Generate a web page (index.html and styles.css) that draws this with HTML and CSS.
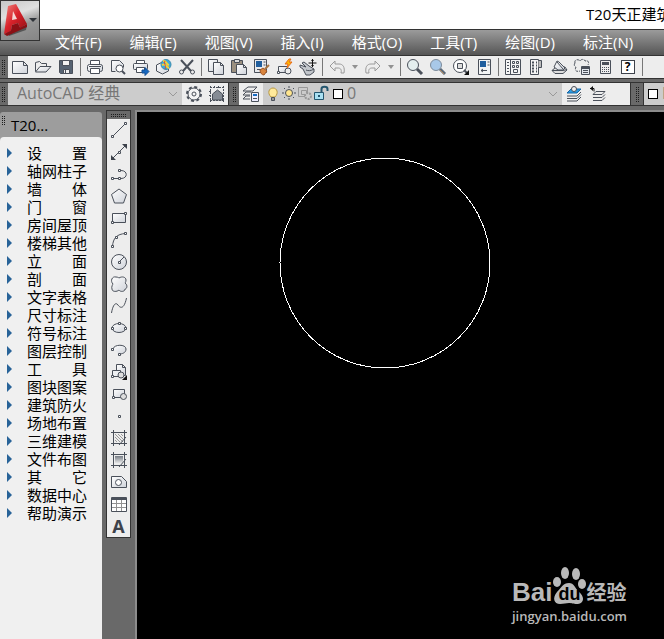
FILE: index.html
```html
<!DOCTYPE html>
<html lang="zh-CN">
<head>
<meta charset="utf-8">
<title>T20天正建筑</title>
<link rel="stylesheet" href="styles.css">
</head>
<body>
<svg class="defs" aria-hidden="true">
  <defs>
    <linearGradient id="pale" x1="0" y1="0" x2="1" y2="1"><stop offset="0" stop-color="#fff"/><stop offset="1" stop-color="#cfd3da"/></linearGradient>
    <linearGradient id="shade" x1="0" y1="0" x2="0" y2="1"><stop offset="0" stop-color="#777d85"/><stop offset="1" stop-color="#f4f4f4"/></linearGradient>
    <linearGradient id="red" x1="0" y1="0" x2="1" y2="1"><stop offset="0" stop-color="#ef8a82"/><stop offset=".45" stop-color="#d9232b"/><stop offset="1" stop-color="#8e0c12"/></linearGradient>
  </defs>
</svg>

<header class="titlebar">
  <button class="app" aria-label="应用程序菜单">
    <svg width="38" height="39" viewBox="0 0 38 39"><path d="M5 30 8 35l17-6 1-5z" fill="#555"/><path d="M7 5 15 3 26 23 19 27 17 22 11 24 10 30 3 33z" fill="url(#red)"/><path d="M12 10 16 18 11 19z" fill="#f5d6d3"/><path d="M3 33 10 30 11 24 17 22 19 27 26 23v3L6 35z" fill="#8b1015"/><path d="M28 17h8l-4 4z" fill="#30343a"/></svg>
  </button>
  <h1>T20天正建筑</h1>
</header>

<nav class="menu">
  <button>文件(F)</button><button>编辑(E)</button><button>视图(V)</button><button>插入(I)</button><button>格式(O)</button><button>工具(T)</button><button>绘图(D)</button><button>标注(N)</button>
</nav>

<div class="bar" role="toolbar">
  <i class="grip"></i>
  <div class="tools">
    <button aria-label="新建"><svg viewBox="0 0 18 18"><path d="M1.500 3.500h11l4 4v8h-15z" fill="url(#pale)"/><path d="M12.500 3.500v4h4"/></svg></button>
    <button aria-label="打开"><svg viewBox="0 0 18 18"><path d="M1.500 13.500v-9l4-1 2 2h5v3"/><path d="M1.500 14 6 8.500h11L12 14z" fill="url(#pale)"/></svg></button>
    <button aria-label="保存"><svg viewBox="0 0 18 18"><path d="M2.500 2.500h13v13h-12l-1-1z" fill="#566372"/><path d="M5.500 2.500h7v5h-7z" fill="#f2f2f2"/><path d="M6.500 11.500h6v4h-6z" fill="#eee"/><path d="M8.500 12v3"/></svg></button>
    <i class="sep"></i>
    <button aria-label="打印"><svg viewBox="0 0 18 18"><path d="M4.500 7V2.500h9V7" fill="#fff"/><rect x="1.500" y="6.500" width="15" height="7" rx="2" fill="url(#pale)"/><path d="M4.500 10.500h9v5h-9z" fill="#fff"/><path d="M3 8.500h12"/></svg></button>
    <button aria-label="打印预览"><svg viewBox="0 0 18 18"><path d="M2.500 13.500v-11h8l4 4v3M2.500 13.500h4" fill="url(#pale)"/><circle cx="10.500" cy="10.500" r="3.500" fill="#fff"/><path d="m13 13 3 3" stroke-width="2"/></svg></button>
    <button aria-label="发布"><svg viewBox="0 0 18 18"><path d="M4.500 6V2.500h8V6" fill="#fff"/><rect x="1.500" y="5.500" width="14" height="6" rx="1" fill="url(#pale)"/><path d="M4.500 9.500h8v5h-8z" fill="#fff"/><path d="M10 12h3V9.500l4 4-4 4V15h-3z" fill="#1768c0" stroke="#124f94"/></svg></button>
    <button aria-label="三维打印"><svg viewBox="0 0 18 18"><path d="m1.500 7 6-3 6 3v6l-6 3-6-3z" fill="url(#pale)"/><circle cx="11" cy="6.500" r="5" fill="#39a9dc" stroke="#3f8cac"/><path d="M8 3c5 0 2 3 6 4M7 7c4-2 4 2 7 3" stroke="#f1d23a" stroke-width="2"/><path d="M10 3c-2 3 2 4 0 8" stroke="#db4538"/></svg></button>
    <button aria-label="剪切"><svg viewBox="0 0 18 18"><path d="m3 2 10 11M15 2 5 13" stroke-width="2"/><circle cx="3.500" cy="14" r="2"/><circle cx="14.500" cy="14" r="2"/></svg></button>
    <i class="sep"></i>
    <button aria-label="复制"><svg viewBox="0 0 18 18"><path d="M1.500 1.500h9v12h-9z" fill="url(#pale)"/><path d="M6.500 4.500h7l3 3v9h-10z" fill="url(#pale)"/><path d="M13.500 4.500v3h3"/></svg></button>
    <button aria-label="粘贴"><svg viewBox="0 0 18 18"><path d="M1.500 2.500h11v12h-11z" fill="#9b9080"/><path d="M4.500 1.500h5v3h-5z" fill="#ddd"/><path d="M6.500 6.500h7l3 3v7h-10z" fill="url(#pale)"/><path d="M13.500 6.500v3h3"/></svg></button>
    <button aria-label="特性匹配"><svg viewBox="0 0 18 18"><path d="M1.500 1.500h12v13h-12z" fill="#e8eaed"/><path d="M3 3h6v6H3z" fill="#205f9e" stroke="none"/><path d="M10.500 4h2M10.500 7h2M4 11.500h4"/><path d="m16 7-4 4" stroke="#a77645" stroke-width="2"/><path d="m7 12 3-2 4 3-3 4c-2 0-4-2-4-5z" fill="#d9853e" stroke="#9c5525"/></svg></button>
    <button aria-label="块编辑器"><svg viewBox="0 0 18 18"><path d="M2.500 8.500h9v6h-9z" fill="url(#pale)"/><circle cx="12" cy="13" r="3" fill="#eee"/><path d="M1.500 13.500h2v2h-2z" fill="#fff"/><path d="m13 1-4 5h3l-1 4 5-6h-3l2-3z" fill="#ffb600" stroke="#e66b1b"/></svg></button>
    <button aria-label="平移"><svg viewBox="0 0 18 18"><path d="M4 11 1 9V7l6 2-4-4 2-1 5 4 5 3v3l-4 3H7z" fill="#c3c7cc"/><path d="M7 12c2 1 5 1 8-1"/><path d="M13.500 1v8M9.500 5h8" stroke="#111"/><path d="m12 3 1.500-2L15 3zM12 7l1.500 2L15 7z" fill="#111" stroke="none"/></svg></button>
    <i class="sep"></i>
    <button class="off" aria-label="放弃"><svg viewBox="0 0 18 18"><path d="m2 8 5-5v3h4c4 0 6 3 5 9h-3c1-4-1-5-3-5H7v3z"/></svg></button>
    <button class="caret" aria-label="放弃列表"></button>
    <button class="off" aria-label="重做"><svg viewBox="0 0 18 18"><path d="m16 8-5-5v3H7c-4 0-6 3-5 9h3c-1-4 1-5 3-5h3v3z"/></svg></button>
    <button class="caret" aria-label="重做列表"></button>
    <i class="sep"></i>
    <button aria-label="缩放"><svg viewBox="0 0 18 18"><circle cx="7" cy="7" r="5.500" fill="#e4eeee"/><path d="m11 11 5 5" stroke-width="3"/></svg></button>
    <button aria-label="窗口缩放"><svg viewBox="0 0 18 18"><circle cx="7" cy="7" r="5.500" fill="#a8c8e8" stroke="#7d8b9a"/><path d="m11 11 5 5" stroke="#5d6b7a" stroke-width="3"/><path d="m11 12 4 4" stroke="#b58a60"/></svg></button>
    <button aria-label="范围缩放"><svg viewBox="0 0 18 18"><circle cx="8" cy="8" r="6.500" fill="#fff"/><path d="M5.500 5.500h5v5h-5z" fill="#ddd"/><path d="m12 12 3 3" stroke-width="2"/><path d="M17 12v5h-5z" fill="#111" stroke="none"/></svg></button>
    <button aria-label="特性"><svg viewBox="0 0 18 18"><path d="M3.500 1.500h12v15h-12z" fill="#f2f4f5"/><path d="M5 3h6v6H5z" fill="#1f5f9f" stroke="none"/><path d="M12.500 4h2M12.500 7h2M6 12.500h6M8 11l-2 1.500L8 14"/></svg></button>
    <i class="sep"></i>
    <button aria-label="设计中心"><svg viewBox="0 0 18 18"><path d="M1.500 1.500h15v15h-15z" fill="#f5f5f5"/><path d="M6.500 2v14M3 4.500h2M3 7.500h2M3 10.500h2M3 13.500h2M8.500 3.500h2v2h-2zM12.500 3.500h2v2h-2zM8.500 7.500h2v2h-2zM12.500 7.500h2v2h-2zM9.500 11.500h4v3h-4z"/></svg></button>
    <button aria-label="工具选项板"><svg viewBox="0 0 18 18"><path d="M3.500 1.500h8v15h-8z" fill="#f5f5f5"/><path d="M11.500 2.500h3v7h-3" fill="#bbb"/><path d="M5 4.500h2M9 4.500h1M5 7.500h2M9 7.500h1M5 10.500h2M9 10.500h1M5 13.500h2M9 13.500h1" stroke-width="2"/></svg></button>
    <button aria-label="图纸集"><svg viewBox="0 0 18 18"><path d="M2 12.500 6 9h9l2 3-4 3.500H5z" fill="#ddd"/><path d="m4 9 3-6 2 1 6 6-2 2H8z" fill="url(#pale)"/><path d="m7 4 6 7M2 12.500h11l4-1"/></svg></button>
    <button aria-label="标记集"><svg viewBox="0 0 18 18"><path d="M2 5c-1-4 4-4 5-2 2-3 5-1 5 0 4-1 4 2 3 4M2 5c-2 3 1 4 1 4-2 4 1 5 4 4" stroke-dasharray="3 1"/><path d="M8.500 8.500h8v8h-8z" fill="#e3e7ed"/><path d="M9 10h7" stroke-width="2"/><path d="M10 12.500h5M10 14.500h5"/></svg></button>
    <button aria-label="计算器"><svg viewBox="0 0 18 18"><path d="M4.500 2.500h10v13h-10z" fill="#eee"/><path d="M6 5.500h7" stroke-width="3"/><path d="M6 9.500h7M6 11.500h7M6 13.500h7" stroke-dasharray="1 1"/></svg></button>
    <button class="help" aria-label="帮助"><span>?</span></button>
    <i class="sep"></i>
  </div>
</div>

<div class="bars">
  <i class="grip"></i>
  <div class="group">
    <div class="combo workspace"><select aria-label="工作空间"><option>AutoCAD 经典</option></select><svg class="chev" viewBox="0 0 10 6"><path d="m1 1 4 4 4-4"/></svg></div>
    <button aria-label="工作空间设置"><svg viewBox="0 0 18 18"><circle cx="9" cy="9" r="7" stroke-width="2" stroke-dasharray="3 2.500"/><circle cx="9" cy="9" r="6" fill="#f4f4f4"/><circle cx="9" cy="9" r="2"/></svg></button>
    <button aria-label="我的工作空间"><svg viewBox="0 0 18 18"><path d="M2 2.500h15M2 15.500h15M2.500 1v16M15.500 1v16M6.500 1v3M10.500 1v3M1 6.500h3M1 10.500h3" stroke-dasharray="2 1"/><path d="m4.500 9 5-4 5 4v6h-10z" fill="#858b94"/></svg></button>
  </div>
  <i class="grip"></i>
  <div class="group layers">
    <button aria-label="图层特性"><svg viewBox="0 0 18 18"><path d="m1 6 5-4h9l-4 4zM1 10l3-3h5M1 14l3-3h4M1 10h7M1 14h7"/><path d="M9.500 7.500h7v9h-7z" fill="#eef"/><path d="M11 9h4v2h-4z" fill="#176cc1" stroke="none"/><path d="M11 13.500h4"/></svg></button>
    <div class="combo layer">
      <svg viewBox="0 0 16 18"><path d="M6 12C2 8 4 3 8 3s6 5 2 9z" fill="#ffe99a" stroke="#b79844"/><path d="M6.500 12.500h3v3h-3z" fill="#999"/></svg>
      <svg viewBox="0 0 16 18"><circle cx="8" cy="8" r="3.500" fill="#ffe58d"/><path d="M8 1v2M8 13v2M1 8h2M13 8h2M3 3l1 1M12 12l1 1M13 3l-1 1M4 12l-1 1"/></svg>
      <svg class="faint" viewBox="0 0 16 18"><path d="M1.500 2.500h9v9h-9zM4.500 5.500h5v4h-5z"/><circle cx="11" cy="11" r="3" fill="#ccc" stroke-dasharray="2 1" stroke-width="2"/></svg>
      <svg viewBox="0 0 16 18"><path d="M1.500 7.500h9v7h-9z" fill="#a9e0f2" stroke="#24566e"/><path d="M8.500 8V4c0-3 6-3 6 0v2M6 10v2" stroke="#24566e" stroke-width="2"/></svg>
      <i class="swatch"></i>
      <select aria-label="图层"><option>0</option></select>
      <svg class="chev" viewBox="0 0 10 6"><path d="m1 1 4 4 4-4"/></svg>
    </div>
    <button aria-label="置为当前图层"><svg viewBox="0 0 18 18"><path d="m2 8 4-4h10l-4 4z" fill="#2b9ae0" stroke="#1768a8"/><circle cx="9" cy="4" r="2.500" fill="#eee"/><path d="M2 11h10l4-4M2 13.500h10l4-4M2 16h10l4-4"/></svg></button>
    <button aria-label="上一个图层"><svg viewBox="0 0 18 18"><path d="M1 3.500h4v3" stroke="#111"/><path d="M4 1v5L1 3.500z" fill="#111" stroke="none"/><path d="m4 9.500 3-3h9l-3 3zM4 12.500h9l3-3M4 15.500h9l3-3"/></svg></button>
  </div>
  <i class="grip wide"></i>
  <div class="combo color"><i class="swatch"></i><select aria-label="颜色"><option>ByLayer</option></select></div>
</div>

<main class="work">
  <aside class="side">
    <h2><i class="dots"></i>T20...</h2>
    <ul>
      <li><button>设　　置</button></li>
      <li><button>轴网柱子</button></li>
      <li><button>墙　　体</button></li>
      <li><button>门　　窗</button></li>
      <li><button>房间屋顶</button></li>
      <li><button>楼梯其他</button></li>
      <li><button>立　　面</button></li>
      <li><button>剖　　面</button></li>
      <li><button>文字表格</button></li>
      <li><button>尺寸标注</button></li>
      <li><button>符号标注</button></li>
      <li><button>图层控制</button></li>
      <li><button>工　　具</button></li>
      <li><button>图块图案</button></li>
      <li><button>建筑防火</button></li>
      <li><button>场地布置</button></li>
      <li><button>三维建模</button></li>
      <li><button>文件布图</button></li>
      <li><button>其　　它</button></li>
      <li><button>数据中心</button></li>
      <li><button>帮助演示</button></li>
    </ul>
  </aside>

  <div class="draw" role="toolbar" aria-label="绘图">
    <i class="handle"></i>
    <button aria-label="直线"><svg viewBox="0 0 18 18"><path d="M3 15 15 3"/><path class="node" d="M1.500 14.500h2v2h-2zM14.500 1.500h2v2h-2z"/></svg></button>
    <button aria-label="构造线"><svg viewBox="0 0 18 18"><path d="M3 15 15 3"/><path d="M1 12v5h5zM12 1h5v5z" fill="#3d424b" stroke="none"/><path class="node" d="M8.500 8.500h2v2h-2z"/></svg></button>
    <button aria-label="多段线"><svg viewBox="0 0 18 18"><path d="M2 13.500h9c7 0 7-8 0-8H9"/><path class="node" d="M1.500 12.500h2v2h-2zM8.500 12.500h2v2h-2zM8.500 4.500h2v2h-2z"/></svg></button>
    <button aria-label="多边形"><svg viewBox="0 0 18 18"><path d="m9 2 7.500 5.500-3 8.500h-9l-3-8.500z" fill="url(#pale)"/></svg></button>
    <button aria-label="矩形"><svg viewBox="0 0 18 18"><path d="M2.500 4.500h13v9h-13z" fill="url(#pale)"/><path class="node" d="M1.500 12.500h2v2h-2zM14.500 3.500h2v2h-2z"/></svg></button>
    <button aria-label="圆弧"><svg viewBox="0 0 18 18"><path d="M2.500 15.500C3 7 7 3 15.500 2.500"/><path class="node" d="M1.500 14.500h2v2h-2zM5.500 5.500h2v2h-2zM14.500 1.500h2v2h-2z"/></svg></button>
    <button aria-label="圆"><svg viewBox="0 0 18 18"><circle cx="9" cy="9" r="7.500" fill="url(#pale)"/><path d="m9 9 5-5"/><path class="node" d="M8.500 8.500h2v2h-2z"/></svg></button>
    <button aria-label="修订云线"><svg viewBox="0 0 18 18"><path d="M3 9C0 6 2 1 6 2c2 0 3 1 3 1 3-2 7-1 7 2 0 2-1 3-1 3 3 2 2 6 0 6 0 3-5 3-6 1-2 2-7 2-7-1-1-2 1-5 1-5z" fill="url(#pale)"/></svg></button>
    <button aria-label="样条曲线"><svg viewBox="0 0 18 18"><path d="M1.500 16C3 7 6 5 8 8s6 5 8.500-7"/></svg></button>
    <button aria-label="椭圆"><svg viewBox="0 0 18 18"><ellipse cx="9" cy="9" rx="7" ry="4.500" fill="url(#pale)"/><path class="node" d="M1.500 8.500h2v2h-2zM14.500 8.500h2v2h-2zM8.500 3.500h2v2h-2z"/></svg></button>
    <button aria-label="椭圆弧"><svg viewBox="0 0 18 18"><path d="M3 8c1-5 13-5 13 0 0 4-4 5-7 5" fill="url(#pale)"/><path class="node" d="M1.500 7.500h2v2h-2zM8.500 12.500h2v2h-2z"/></svg></button>
    <button aria-label="插入块"><svg viewBox="0 0 18 18"><path d="M6.500 1.500h6l3 3v8h-9zM12.500 1.500v3h3" fill="url(#pale)"/><path d="M2.500 7.500h8v6h-8z" fill="#eef0f2"/><circle cx="11" cy="12" r="3" fill="#ddd"/><path class="node" d="M1.500 12.500h2v2h-2z"/><path d="M17 12v5h-5z" fill="#111" stroke="none"/></svg></button>
    <button aria-label="创建块"><svg viewBox="0 0 18 18"><path d="M3.500 4.500h11v8h-11z" fill="url(#pale)"/><circle cx="13.500" cy="11.500" r="3" fill="#ddd"/><path class="node" d="M2.500 11.500h2v2h-2z"/></svg></button>
    <button aria-label="点"><svg viewBox="0 0 18 18"><path class="node" d="M8.500 8.500h2v2h-2z"/></svg></button>
    <button aria-label="图案填充"><svg viewBox="0 0 18 18"><path d="M1 3.500h16M1 14.500h16M3.500 1v16M14.500 1v16"/><path d="m5 5 8 8M8 5l5 5M5 8l5 5M11 5l2 2M5 11l2 2" stroke="#999"/><path d="M16 8 9 16"/></svg></button>
    <button aria-label="渐变色"><svg viewBox="0 0 18 18"><path d="M5 5h8v8H5z" fill="url(#shade)" stroke="none"/><path d="M1 3.500h16M1 14.500h16M3.500 1v16M14.500 1v16M16 8 9 16"/></svg></button>
    <button aria-label="面域"><svg viewBox="0 0 18 18"><path d="M1.500 3.500h10l5 5v6h-15z" fill="url(#pale)"/><circle cx="8.500" cy="9.500" r="3" fill="#fff"/></svg></button>
    <button aria-label="表格"><svg viewBox="0 0 18 18"><path d="M1.500 2.500h15v14h-15z" fill="#fff"/><path d="M2 4h14" stroke-width="2"/><path d="M2 8.500h14M2 12.500h14M6.500 5v11M11.500 5v11" stroke="#929292"/></svg></button>
    <button aria-label="多行文字"><b>A</b></button>
  </div>

  <section class="canvas" aria-label="绘图区">
    <svg class="drawing"><circle cx="248" cy="151" r="105"/></svg>
    <div class="mark">
      <div class="brand">
        <span>Bai</span>
        <span class="paw"><svg viewBox="0 0 34 38"><ellipse cx="5" cy="15" rx="4" ry="5"/><ellipse cx="13" cy="6" rx="4" ry="6"/><ellipse cx="24" cy="7" rx="4" ry="6"/><ellipse cx="30" cy="17" rx="4" ry="5"/><path d="M17 16c5 0 6 5 10 9 7 6 4 12-2 12-4 0-5-1-8-1s-5 1-9 1c-6 0-8-6-3-12 4-4 6-9 12-9z"/></svg><b>du</b></span>
        <span class="cn">经验</span>
      </div>
      <div class="url">jingyan.baidu.com</div>
    </div>
  </section>
</main>
</body>
</html>
```

FILE: styles.css
```css
* { box-sizing: border-box; }
body {
  margin: 0;
  height: 100vh;
  display: flex;
  flex-direction: column;
  overflow: hidden;
  background: #696969;
  color: #000;
  font: 15px/18px "Open Sans", "Noto Sans CJK SC", sans-serif;
}
button, select {
  margin: 0;
  padding: 0;
  border: 0;
  background: none;
  color: inherit;
  font: inherit;
}
h1, h2, ul { margin: 0; padding: 0; font: inherit; }
svg { fill: none; stroke: #4a505a; display: block; }
.defs { position: absolute; width: 0; height: 0; }

.titlebar {
  position: relative;
  flex: none;
  height: 29px;
  background: #fff;
}
.titlebar h1 { padding: 5px 0 0 586px; white-space: nowrap; }
.app {
  position: absolute;
  left: 0;
  top: 0;
  z-index: 1;
  border: 1px solid #333;
  background: linear-gradient(160deg, #c6c6c6, #e0e0e0 35%, #969696 60%, #858585);
}
.app svg { stroke: none; }

.menu {
  flex: none;
  height: 27px;
  display: flex;
  align-items: center;
  gap: 28px;
  padding: 0 0 2px 55px;
  border: solid #333;
  border-width: 1px 0;
  background: linear-gradient(#9b9b9b, #555);
  color: #fff;
}
.menu button { white-space: nowrap; }

.bar, .bars { flex: none; display: flex; }
.bar { height: 23px; border-bottom: 1px solid #333; }
.grip {
  flex: none;
  width: 8px;
  padding: 3px 2px;
  background:
    repeating-linear-gradient(#696969 0 1px, transparent 1px 2px) content-box,
    repeating-linear-gradient(90deg, #1c1c1c 0 1px, #696969 1px 2px) content-box,
    #696969;
}
.tools { flex: 1; display: flex; background: #ededed; overflow: hidden; }
.tools button, .group > button {
  flex: none;
  width: 23px;
  display: grid;
  place-items: center;
}
.tools svg, .group > button svg, .draw svg { width: 18px; height: 18px; }
.sep {
  flex: none;
  width: 6px;
  background: linear-gradient(#777, #777) center / 1px 18px no-repeat;
}
.tools .off svg { stroke: #9a9a9a; }
.tools .caret { width: 13px; }
.caret::before {
  content: "";
  border: 3px solid transparent;
  border-top: 4px solid #929292;
  border-bottom: 0;
}
.help span {
  width: 14px;
  height: 14px;
  border: 1px solid #3d424b;
  background: #fff;
  font: bold 12px/12px "Open Sans", sans-serif;
}

.bars {
  height: 24px;
  margin-top: 3px;
  border: solid #333;
  border-width: 1px 0;
}
.group { flex: none; display: flex; background: #ededed; border-right: 1px solid #333; margin-right: 2px; }
.layers > button:first-child, .layers > .combo + button { width: 24px; }
.layers { padding-right: 21px; }
.grip.wide { width: 10px; padding: 3px; }
.combo {
  display: flex;
  align-items: center;
  background: #ccc;
  color: #777;
  font-size: 16px;
}
.combo select { flex: 1; min-width: 0; height: 22px; appearance: none; padding: 0 0 2px 4px; }
.combo > svg { flex: none; width: 16px; height: 18px; }
.combo > .chev { width: 10px; height: 6px; margin-right: 4px; stroke: #999; }
.workspace { width: 174px; }
.workspace select { padding-left: 9px; }
.layer { width: 299px; padding-left: 2px; }
.combo > .faint { stroke: #999; }
.swatch {
  flex: none;
  width: 10px;
  height: 10px;
  margin-left: 4px;
  border: 1px solid #000;
  background: #fff;
}
.color { flex: 1; min-width: 0; overflow: hidden; border-left: 1px solid #333; }

.work { flex: 1; min-height: 0; display: flex; }
.side {
  flex: none;
  width: 102px;
  margin-top: 6px;
  background: #9d9d9d;
  border-radius: 3px 3px 0 0;
}
.side h2 { position: relative; height: 25px; padding: 4px 0 0 11px; }
.dots {
  position: absolute;
  left: 2px;
  top: 3px;
  width: 3px;
  height: 11px;
  background:
    repeating-linear-gradient(#9d9d9d 0 1px, transparent 1px 2px),
    repeating-linear-gradient(90deg, #1c1c1c 0 1px, #9d9d9d 1px 2px);
}
.side ul {
  height: calc(100% - 25px);
  padding-top: 7px;
  list-style: none;
  background: #f0f0f0;
  border-radius: 4px 4px 0 0;
}
.side li { display: flex; align-items: center; height: 18px; padding-left: 7px; }
.side li::before {
  content: "";
  border: 5px solid transparent;
  border-left: 5px solid #286398;
  border-right: 0;
  margin-right: 15px;
}
.side li button { white-space: nowrap; }

.draw {
  flex: none;
  align-self: flex-start;
  width: 25px;
  margin: 4px 4px 0;
  border: 1px solid #333;
  background: #ededed;
}
.draw button { display: grid; place-items: center; width: 100%; height: 22px; }
.draw b { font: bold 18px/22px "Open Sans", sans-serif; color: #3d424b; }
.node { fill: #fff; }
.handle {
  display: block;
  height: 8px;
  padding: 2px 4px;
  background:
    repeating-linear-gradient(#696969 0 1px, transparent 1px 2px) content-box,
    repeating-linear-gradient(90deg, #1c1c1c 0 1px, #696969 1px 2px) content-box,
    #696969;
}

.canvas {
  position: relative;
  flex: 1;
  min-width: 0;
  margin-top: 4px;
  border: solid #8c8c8c;
  border-width: 2px 0 0 2px;
  background: #000;
  overflow: hidden;
}
.drawing { width: 100%; height: 100%; stroke: #fff; shape-rendering: crispEdges; }
.mark { position: absolute; right: 37px; bottom: 14px; color: #b9b9b9; }
.brand {
  display: flex;
  align-items: flex-end;
  height: 38px;
  margin-bottom: 2px;
  font: bold 26px/26px "Liberation Sans", sans-serif;
}
.paw { position: relative; }
.paw svg { width: 34px; height: 38px; fill: #b9b9b9; stroke: none; }
.paw b { position: absolute; inset: auto 0 2px; text-align: center; color: #000; font-size: 18px; line-height: 18px; }
.brand .cn { font: bold 20px/26px "Noto Sans CJK SC", sans-serif; }
.url { font: 600 13px/18px "Open Sans", sans-serif; }
```
